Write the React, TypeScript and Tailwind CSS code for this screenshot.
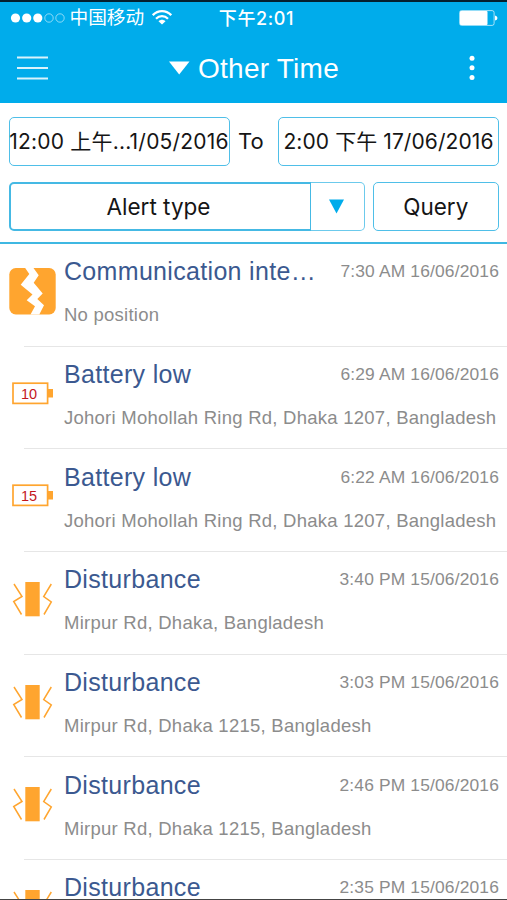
import React from "react";

type AlertKind = "communication" | "battery" | "disturbance";

interface IAlert {
    id: number;
    kind: AlertKind;
    title: string;
    time: string;
    address: string;
    level?: number;
}

const alerts: IAlert[] = [
    {id: 1, kind: "communication", title: "Communication inte…", time: "7:30 AM 16/06/2016", address: "No position"},
    {id: 2, kind: "battery", title: "Battery low", time: "6:29 AM 16/06/2016", address: "Johori Mohollah Ring Rd, Dhaka 1207, Bangladesh", level: 10},
    {id: 3, kind: "battery", title: "Battery low", time: "6:22 AM 16/06/2016", address: "Johori Mohollah Ring Rd, Dhaka 1207, Bangladesh", level: 15},
    {id: 4, kind: "disturbance", title: "Disturbance", time: "3:40 PM 15/06/2016", address: "Mirpur Rd, Dhaka, Bangladesh"},
    {id: 5, kind: "disturbance", title: "Disturbance", time: "3:03 PM 15/06/2016", address: "Mirpur Rd, Dhaka 1215, Bangladesh"},
    {id: 6, kind: "disturbance", title: "Disturbance", time: "2:46 PM 15/06/2016", address: "Mirpur Rd, Dhaka 1215, Bangladesh"},
    {id: 7, kind: "disturbance", title: "Disturbance", time: "2:35 PM 15/06/2016", address: ""},
];

const AlertIcon = ({alert}: {alert: IAlert}) => {
    if (alert.kind === "communication") {
        return (
            <svg width="48" height="48" viewBox="0 0 48 48">
                <rect x="1.3" y="1" width="46.4" height="46.4" rx="6.5" fill="#ffa52f"/>
                <path d="M17 0.8H25.3L30.7 8.3L25.7 15.7L34.7 26.5L29.3 32L36 38.3L31.3 47.6H22.5L27 39.3L18.7 33.3L24.5 27.5L12.7 17.7L21.3 7Z" fill="#fff"/>
            </svg>
        );
    }

    if (alert.kind === "battery") {
        return (
            <svg width="48" height="48" viewBox="0 0 48 48">
                <rect x="5" y="13.2" width="34.6" height="20.2" fill="none" stroke="#ffa52f" strokeWidth="1.7"/>
                <rect x="40" y="19" width="5" height="8.5" fill="#ffa52f"/>
                <text x="21" y="28.6" textAnchor="middle" fontSize="14.5" fill="#c4161c">{alert.level}</text>
            </svg>
        );
    }

    return (
        <svg width="48" height="48" viewBox="0 0 48 48" fill="none" stroke="#ffa52f" strokeWidth="1.5">
            <rect x="17.3" y="7" width="14.4" height="34.3" fill="#ffa52f" stroke="none"/>
            <path d="M6 9L14 21.5L5.7 26.5L13.5 39.5"/>
            <path d="M43.3 9L35.7 21.5L43.3 27L36 39.5"/>
        </svg>
    );
};

const AlertRow = ({alert}: {alert: IAlert}) => (
    <li className="flex h-[102.7px] shrink-0 pl-[8px]">
        <div className="flex h-[94px] w-[56px] shrink-0 items-center">
            <AlertIcon alert={alert}/>
        </div>
        <div className="flex-1 pr-[8px]">
            <div className="flex items-start justify-between pt-[10.2px]">
                <span className="whitespace-nowrap text-[25px] leading-[34px] tracking-[0.32px] text-[#3b5990]">{alert.title}</span>
                <span className="whitespace-nowrap text-[17.4px] leading-[34px] tracking-[0.16px] text-[#8c8c8c]">{alert.time}</span>
            </div>
            <div className="whitespace-nowrap pt-[14px] text-[18.5px] leading-[26px] tracking-[0.25px] text-[#8c8c8c]">{alert.address}</div>
        </div>
    </li>
);

const StatusBar = () => (
    <div className="grid h-[32px] grid-cols-3 items-center px-[10px] text-[18px]">
        <div className="flex items-center">
            <svg width="56" height="12" viewBox="0 0 56 12" fill="#fff" className="shrink-0">
                <circle cx="5.5" cy="6" r="4.6"/>
                <circle cx="16.7" cy="6" r="4.6"/>
                <circle cx="27.8" cy="6" r="4.6"/>
                <circle cx="39" cy="6" r="4.2" fill="none" stroke="#fff" strokeOpacity="0.6" strokeWidth="0.9"/>
                <circle cx="50" cy="6" r="4.2" fill="none" stroke="#fff" strokeOpacity="0.6" strokeWidth="0.9"/>
            </svg>
            <span className="ml-[3.5px] whitespace-nowrap pt-[1px] text-[18.7px]">中国移动</span>
            <svg width="20" height="15" viewBox="0 0 20 15" fill="none" stroke="#fff" className="ml-[8px] shrink-0">
                <path d="M0.8 5.2C6 -0.2 14 -0.2 19.2 5.2" strokeWidth="2.3"/>
                <path d="M4 8.7C7.4 5.2 12.6 5.2 16 8.7" strokeWidth="2.2"/>
                <path d="M6.5 11.2C8.5 9.2 11.5 9.2 13.5 11.2L10 14.6Z" fill="#fff" stroke="none"/>
            </svg>
        </div>
        <div className="whitespace-nowrap pl-[6px] text-center font-medium tracking-[0.6px]">下午2:01</div>
        <svg width="39" height="16" viewBox="0 0 39 16" className="mr-[-1px] justify-self-end">
            <rect x="0.6" y="0.6" width="34.5" height="14.8" rx="2" fill="none" stroke="#fff" strokeOpacity="0.65"/>
            <rect x="1" y="1" width="27.5" height="14" rx="1" fill="#fff"/>
            <path d="M36 5.5Q38.5 6 38.5 8Q38.5 10 36 10.5Z" fill="#fff"/>
        </svg>
    </div>
);

const App = () => {
    return (
        <div className="flex h-[900px] w-[507px] flex-col overflow-hidden border-b border-b-[#444] bg-white font-['Liberation_Sans','Noto_Sans_CJK_SC',sans-serif]">
            <header className="h-[102.5px] shrink-0 border-t-2 border-t-[#04202f] bg-[#00aceb] font-['Inter','Noto_Sans_CJK_SC',sans-serif] text-white">
                <StatusBar/>
                <div className="grid h-[68px] grid-cols-[152px_1fr_35px] items-center pl-[17px]">
                    <svg width="31" height="24" viewBox="0 0 31 24" stroke="#fff" strokeOpacity="0.85" strokeWidth="2">
                        <path d="M0 1.5H31M0 12H31M0 22.5H31"/>
                    </svg>
                    <div className="flex items-center gap-[7px]">
                        <svg width="22" height="14" viewBox="0 0 22 14" fill="#fff">
                            <path d="M0 0.5H20.5L10.2 13.5Z"/>
                        </svg>
                        <h1 className="whitespace-nowrap pt-[2px] font-['Liberation_Sans',sans-serif] text-[28px] leading-[34px] tracking-[0.25px]">Other Time</h1>
                    </div>
                    <svg width="6" height="26" viewBox="0 0 6 26" fill="#fff" className="-ml-[3px]">
                        <circle cx="3" cy="3.2" r="2.5"/>
                        <circle cx="3" cy="12.8" r="2.5"/>
                        <circle cx="3" cy="22.4" r="2.5"/>
                    </svg>
                </div>
            </header>

            <section className="h-[141.5px] shrink-0 border-b-2 border-b-[#3fb8e2] pl-[8.5px] pr-[8px] pt-[14.5px] font-['Inter','Noto_Sans_CJK_SC',sans-serif] text-[#151515]">
                <div className="flex h-[49px] items-center">
                    <button className="flex h-full w-[221px] items-center justify-center whitespace-nowrap rounded-[5px] border border-[#4fbfe8] text-[21px] tracking-[0.2px]">12:00 上午...1/05/2016</button>
                    <span className="w-[48.5px] pl-[8.5px] text-[22px]">To</span>
                    <button className="flex h-full w-[221px] items-center justify-center whitespace-nowrap rounded-[5px] border border-[#4fbfe8] text-[21px] tracking-[0.08px]">2:00 下午 17/06/2016</button>
                </div>
                <div className="mt-[16px] flex h-[49px] text-[22.5px]">
                    <button className="w-[302px] rounded-l-[5px] border-2 border-r border-[#45b9e4] pr-[3px]">Alert type</button>
                    <button className="flex w-[54px] items-center justify-center rounded-r-[5px] border border-l-0 border-[#6ccaec]">
                        <svg width="16" height="15" viewBox="0 0 16 15" fill="#00aceb">
                            <path d="M0 0.5H15L7.5 14.5Z"/>
                        </svg>
                    </button>
                    <button className="ml-[8px] w-[126.5px] rounded-[5px] border border-[#4fbfe8]">Query</button>
                </div>
            </section>

            <ul className="flex min-h-0 flex-1 flex-col overflow-hidden">
                {alerts.map((alert) => (
                    <React.Fragment key={alert.id}>
                        <AlertRow alert={alert}/>
                        <li className="ml-[24px] mt-[-1px] h-px shrink-0 bg-[#e6e6e6]"/>
                    </React.Fragment>
                ))}
            </ul>
        </div>
    );
};

export default App;
